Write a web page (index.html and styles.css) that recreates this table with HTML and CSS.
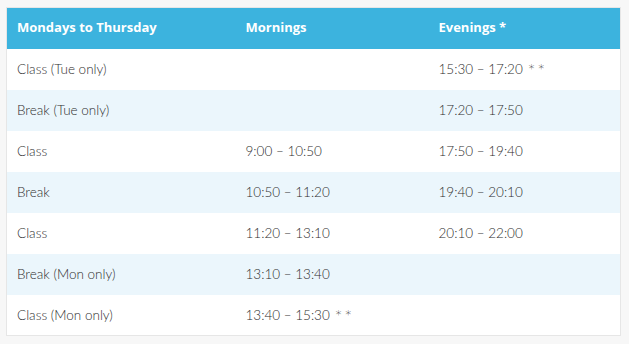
FILE: index.html
```html
<!DOCTYPE html>
<html>
<head>
<meta charset="utf-8">
<link rel="stylesheet" href="styles.css">
</head>
<body>
<div class="wrap">
<table class="schedule">
  <thead>
    <tr><th class="c1">Mondays to Thursday</th><th class="c2">Mornings</th><th class="c3">Evenings *</th></tr>
  </thead>
  <tbody>
    <tr><td>Class (Tue only)</td><td></td><td>15:30 – 17:20 <span class="star">* *</span></td></tr>
    <tr><td>Break (Tue only)</td><td></td><td>17:20 – 17:50</td></tr>
    <tr><td>Class</td><td>9:00 – 10:50</td><td>17:50 – 19:40</td></tr>
    <tr><td>Break</td><td>10:50 – 11:20</td><td>19:40 – 20:10</td></tr>
    <tr><td>Class</td><td>11:20 – 13:10</td><td>20:10 – 22:00</td></tr>
    <tr><td>Break (Mon only)</td><td>13:10 – 13:40</td><td></td></tr>
    <tr><td>Class (Mon only)</td><td>13:40 – 15:30 <span class="star">* *</span></td><td></td></tr>
  </tbody>
</table>
</div>
</body>
</html>
```
FILE: styles.css
```css
html, body { margin: 0; padding: 0; background: #f7f7f7; }
.wrap { padding: 7px 7px 0 6px; }
.schedule {
  width: 615px;
  border-collapse: collapse;
  border: 1px solid #e6e6e6;
  background: #fff;
  table-layout: fixed;
}
.schedule th {
  background: #3cb3de;
  color: #fff;
  font-family: "Open Sans", sans-serif;
  font-weight: 700;
  font-size: 13px;
  text-align: left;
  height: 41px;
  padding: 0 10px 2px;
  box-sizing: border-box;
  vertical-align: middle;
}
.c1 { width: 229px; }
.c2 { width: 193px; }
.schedule td {
  font-family: "Lato", sans-serif;
  font-weight: 300;
  font-size: 13.5px;
  color: #2e2e2e;
  height: 41px;
  padding: 0 10px;
  box-sizing: border-box;
  vertical-align: middle;
}
.star {
  font-family: "DejaVu Sans", sans-serif;
  font-size: 12px;
  color: #222;
  position: relative;
  top: -1px;
  margin-left: 2px;
}
.schedule tbody tr:nth-child(even) td { background: #ebf6fc; }
```
